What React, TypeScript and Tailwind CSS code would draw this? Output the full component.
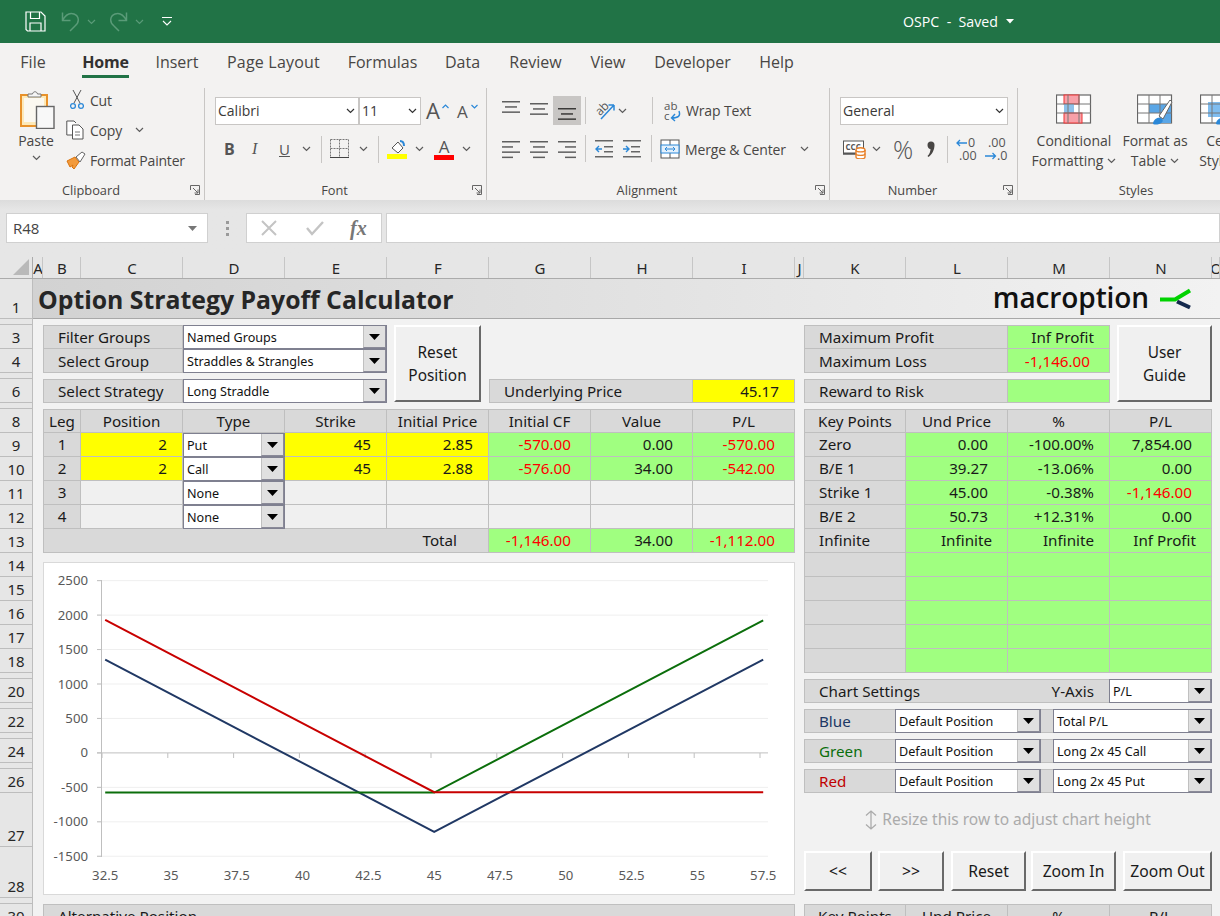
import React from "react";

const ui = "font-['Open_Sans','Noto_Sans',sans-serif]";
const cellFont = "font-['Noto_Sans','Open_Sans',sans-serif]";

const Chev = ({ className = "", color = "#5c5c5c" }: { className?: string; color?: string }) => (
  <svg width="9" height="6" viewBox="0 0 9 6" className={className}>
    <path d="M1 1l3.5 3.5L8 1" fill="none" stroke={color} strokeWidth="1.2" />
  </svg>
);

const Lines = ({ widths, x = [0, 0, 0, 0], y0 = 1, active = false }: { widths: number[]; x?: number[]; y0?: number; active?: boolean }) => (
  <svg width="18" height="20" viewBox="0 0 18 20" className="block">
    {widths.map((w, i) => (
      <rect key={i} x={x[i]} y={y0 + i * 5.2} width={w} height="1.5" fill={active ? "#3b3a39" : "#5f5f5f"} />
    ))}
  </svg>
);

const Launcher = () => (
  <svg width="10" height="10" viewBox="0 0 10 10">
    <path d="M.5 5V.5H9.5V9.5H5M3 3l5 5M8 4.500V8H4.500" fill="none" stroke="#666" strokeWidth="1" />
  </svg>
);

const GroupLabel = ({ children, launcher = true }: { children: string; launcher?: boolean }) => (
  <div className="flex h-[20px] items-center justify-center relative top-[1px] pr-[22px] text-[12.8px] text-[#484644]">
    {children}
    {launcher && (
      <span className="absolute right-[4px] top-[4px] flex">
        <Launcher />
      </span>
    )}
  </div>
);

const Vsep = () => <div className="w-px h-[27px] bg-[#c8c6c4]" />;

function TopBar() {
  return (
    <div className="h-[43px] bg-[#217346] flex items-center pl-[25px] text-white">
      <svg width="21" height="21" viewBox="0 0 21 21" className="shrink-0">
        <path d="M1 1h15l4 4v15H2.500L1 18.500z" fill="none" stroke="#fff" strokeWidth="1.2" />
        <path d="M5.500 1v6.500h9V1M5 20v-8h11v8" fill="none" stroke="#fff" strokeWidth="1.2" />
      </svg>
      <svg width="19" height="21" viewBox="0 0 19 21" className="ml-[15px] shrink-0">
        <path d="M1.500 1.500v8h8M1.500 9.500C5 3 9 1.500 13 3c5 2 6 8 1 12l-5 5" fill="none" stroke="#5a9b78" strokeWidth="1.5" />
      </svg>
      <Chev className="ml-[7px]" color="#5a9b78" />
      <svg width="19" height="21" viewBox="0 0 19 21" className="ml-[13px] shrink-0">
        <path d="M17.500 1.500v8h-8M17.500 9.500C14 3 10 1.500 6 3c-5 2-6 8-1 12l5 5" fill="none" stroke="#5a9b78" strokeWidth="1.5" />
      </svg>
      <Chev className="ml-[7px]" color="#5a9b78" />
      <svg width="10" height="9" viewBox="0 0 10 9" className="ml-[18px] shrink-0">
        <path d="M0 .5h10M1 4l4 4 4-4" fill="none" stroke="#fff" strokeWidth="1.1" />
      </svg>
      <span className={`ml-[731px] text-[14.2px] whitespace-pre ${ui}`}>OSPC  -  Saved</span>
      <svg width="8" height="5" viewBox="0 0 8 5" className="ml-[8px]">
        <path d="M0 0h8L4 4.500z" fill="#fff" />
      </svg>
    </div>
  );
}

function Tabs() {
  const tabs: [string, string][] = [
    ["File", "ml-[21px] w-[24px]"],
    ["Home", "ml-[37px] w-[47px]"],
    ["Insert", "ml-[27px] w-[42px]"],
    ["Page Layout", "ml-[29px] w-[93px]"],
    ["Formulas", "ml-[28px] w-[69px]"],
    ["Data", "ml-[28px] w-[35px]"],
    ["Review", "ml-[29px] w-[53px]"],
    ["View", "ml-[28px] w-[36px]"],
    ["Developer", "ml-[28px] w-[77px]"],
    ["Help", "ml-[28px] w-[35px]"],
  ];
  return (
    <div className={`h-[37px] flex items-center bg-[#f3f2f1] text-[16px] text-[#484644] ${ui}`}>
      {tabs.map(([t, m]) => (
        <div
          key={t}
          className={`${m} relative h-[37px] flex items-center justify-center whitespace-nowrap ${t === "Page Layout" ? "tracking-[0.2px]" : ""} ${t === "Home" ? "font-bold text-[#323130] tracking-[-0.2px]" : ""}`}
        >
          {t}
          {t === "Home" && <div className="absolute left-0 right-0 top-[32px] h-[3px] bg-[#217346]" />}
        </div>
      ))}
    </div>
  );
}

function Combo({ text, w, h = "h-[28px]" }: { text: string; w: string; h?: string }) {
  return (
    <div className={`${w} ${h} bg-white border border-[#c8c6c4] flex items-center justify-between pl-[2px] pr-[3px] text-[14px] text-[#3b3a39]`}>
      <span className="-mt-[1px]">{text}</span>
      <Chev color="#333" />
    </div>
  );
}

function Clipboard() {
  return (
    <div className="w-[205px] shrink-0 h-[112px] mt-[8px] border-r border-[#c8c6c4] flex flex-col">
      <div className="flex-1 flex">
        <div className="w-[60px] ml-[6px] flex flex-col items-center pt-[2px]">
          <svg width="35" height="39" viewBox="0 0 35 39" className="ml-[3px]">
            <rect x="1" y="5" width="26" height="31" fill="#fde9b8" stroke="#e8922a" strokeWidth="2" />
            <path d="M4 8h20v24H4z" fill="#fbf8f0" />
            <path d="M8 7V4h4.500C13 1 17 1 17.500 4H21v3z" fill="#f5f5f5" stroke="#777" />
            <rect x="16.500" y="16.500" width="17.500" height="22" fill="#f8f8f8" stroke="#666" strokeWidth="1.4" />
          </svg>
          <div className="text-[14px] text-[#484644] leading-[18px] mt-[3px]">Paste</div>
          <Chev className="mt-[5px]" />
        </div>
        <div className="flex flex-col text-[14px] text-[#484644] tracking-[-0.2px] -mt-[3px]">
          <div className="h-[30px] flex items-center">
            <span className="w-[24px] flex justify-end pr-[6px]">
              <svg width="14" height="20" viewBox="0 0 14 20">
                <path d="M3 0l7 13M11 0L4 13" stroke="#555" fill="none" />
                <circle cx="3" cy="16" r="2.400" fill="none" stroke="#2b88d8" strokeWidth="1.3" />
                <circle cx="11" cy="16" r="2.400" fill="none" stroke="#2b88d8" strokeWidth="1.3" />
              </svg>
            </span>
            Cut
          </div>
          <div className="h-[30px] flex items-center">
            <span className="w-[24px] flex">
              <svg width="18" height="20" viewBox="0 0 18 20">
                <path d="M6 15H.8V1H8l2 2M6.500 5H13l4 4v10H6.500z" fill="#fff" stroke="#555" />
                <path d="M9 12h5M9 15h5" stroke="#777" />
              </svg>
            </span>
            Copy
            <Chev className="ml-[13px]" />
          </div>
          <div className="h-[30px] flex items-center">
            <span className="w-[24px] flex">
              <svg width="21" height="19" viewBox="0 0 21 19">
                <path d="M1 10l8-4 4 5-5 7-2-2 1-2-3 2-3-6z" fill="#f29a3b" stroke="#d9730d" />
                <path d="M10 6l6-5 3 2-5 8z" fill="#fff" stroke="#666" />
              </svg>
            </span>
            Format Painter
          </div>
        </div>
      </div>
      <GroupLabel>Clipboard</GroupLabel>
    </div>
  );
}

function FontGroup() {
  return (
    <div className="w-[282px] shrink-0 h-[112px] mt-[8px] border-r border-[#c8c6c4] flex flex-col">
      <div className="flex-1 pl-[10px] pt-[9px]">
        <div className="flex items-center">
          <Combo text="Calibri" w="w-[144px]" />
          <Combo text="11" w="w-[62px]" />
          <span className="ml-[5px] text-[22px] leading-none text-[#555] w-[15px] -mt-[2px]">A</span>
          <svg width="7" height="5" viewBox="0 0 7 5" className="-mt-[10px] ml-[1px]">
            <path d="M.5 4L3.500 1 6.500 4" fill="none" stroke="#2b88d8" strokeWidth="1.2" />
          </svg>
          <span className="ml-[8px] text-[17px] leading-none text-[#555] w-[14px]">A</span>
          <svg width="7" height="5" viewBox="0 0 7 5" className="-mt-[10px]">
            <path d="M.5 1L3.500 4 6.500 1" fill="none" stroke="#2b88d8" strokeWidth="1.2" />
          </svg>
        </div>
        <div className="flex items-center h-[28px] mt-[10px] ml-[9px] text-[#484644]">
          <span className="w-[28px] text-[16px] font-bold text-[#555]">B</span>
          <span className="w-[27px] text-[16px] italic text-[#555] font-['Liberation_Serif',serif]">I</span>
          <span className="w-[23px] text-[15px] underline text-[#555]">U</span>
          <Chev />
          <div className="ml-[10px] mr-[8px]">
            <Vsep />
          </div>
          <svg width="20" height="20" viewBox="0 0 20 20">
            <path d="M.5.5h18v18M.5.5v18M9.500.5v18M.5 9.500h18" fill="none" stroke="#777" strokeDasharray="2 1" />
            <path d="M0 18.500h19" stroke="#444" />
          </svg>
          <Chev className="ml-[9px]" />
          <div className="ml-[10px] mr-[8px]">
            <Vsep />
          </div>
          <svg width="21" height="21" viewBox="0 0 21 21">
            <path d="M5 9l6-6 5 6-5 5z" fill="#fff" stroke="#555" />
            <path d="M13 2c2 0 4 1 4 5" fill="none" stroke="#2b88d8" strokeWidth="2" />
            <rect x="0" y="15" width="20" height="5" fill="#ffff00" />
          </svg>
          <Chev className="ml-[7px]" />
          <div className="ml-[10px] w-[20px] flex flex-col items-center">
            <span className="text-[17px] leading-[17px] text-[#555]">A</span>
            <div className="w-[20px] h-[5px] bg-[#ff0000]" />
          </div>
          <Chev className="ml-[8px]" />
        </div>
      </div>
      <GroupLabel>Font</GroupLabel>
    </div>
  );
}

const Arrow = ({ dir }: { dir: "l" | "r" }) => (
  <svg width="18" height="20" viewBox="0 0 18 20" className="block">
    <rect x="0" y="1" width="18" height="1.500" fill="#666" />
    <rect x={dir === "l" ? 9 : 8} y="7" width="9" height="1.500" fill="#666" />
    <rect x={dir === "l" ? 9 : 8} y="12" width="9" height="1.500" fill="#666" />
    <rect x="0" y="17" width="18" height="1.500" fill="#666" />
    <path d={dir === "l" ? "M7 10H1M4 7l-3 3 3 3" : "M0 10h6M3 7l3 3-3 3"} fill="none" stroke="#2b88d8" strokeWidth="1.4" />
  </svg>
);

function Alignment() {
  return (
    <div className="w-[343px] shrink-0 h-[112px] mt-[8px] border-r border-[#c8c6c4] flex flex-col">
      <div className="flex-1 pl-[15px] pt-[8px]">
        <div className="flex items-center h-[29px]">
          <div className="w-[28px] -mt-[8px]">
            <Lines widths={[18, 12, 18]} x={[0, 3, 0]} y0={4} />
          </div>
          <div className="w-[23px] -mt-[3px]">
            <Lines widths={[18, 12, 18]} x={[0, 3, 0]} y0={4} />
          </div>
          <div className="w-[28px] h-[29px] bg-[#c8c6c4] flex items-center justify-center pt-[7px]">
            <Lines widths={[18, 12, 18]} x={[0, 3, 0]} y0={4} active />
          </div>
          <div className="ml-[4px] mr-[8px]">
            <Vsep />
          </div>
          <svg width="23" height="24" viewBox="0 0 23 24" className="overflow-visible">
            <path d="M7 20L20 6M20 6h-5.500M20 6v5.500" fill="none" stroke="#2b88d8" strokeWidth="1.5" />
            <text x="2" y="14" fontSize="12" fill="#555" transform="rotate(-45 8 11)">ab</text>
          </svg>
          <Chev className="ml-[1px]" />
          <div className="ml-[25px] mr-[11px]">
            <Vsep />
          </div>
          <svg width="18" height="22" viewBox="0 0 18 22" className="overflow-visible">
            <text x="0" y="10" fontSize="11.500" fill="#555">ab</text>
            <text x="0" y="20" fontSize="11.500" fill="#555">c</text>
            <path d="M15 11c2 5-1 7-7 7M11 14l-3.500 4 3.500 3" fill="none" stroke="#2b88d8" strokeWidth="1.4" />
          </svg>
          <span className="ml-[4px] text-[14px] text-[#484644] tracking-[-0.15px]">Wrap Text</span>
        </div>
        <div className="flex items-center h-[29px] mt-[9px]">
          <div className="w-[28px]">
            <Lines widths={[18, 11, 18, 11]} y0={2} />
          </div>
          <div className="w-[28px]">
            <Lines widths={[18, 12, 18, 12]} x={[0, 3, 0, 3]} y0={2} />
          </div>
          <div className="w-[23px]">
            <Lines widths={[18, 11, 18, 11]} x={[0, 7, 0, 7]} y0={2} />
          </div>
          <div className="ml-[4px] mr-[9px]">
            <Vsep />
          </div>
          <div className="w-[28px]">
            <Arrow dir="l" />
          </div>
          <div className="w-[18px]">
            <Arrow dir="r" />
          </div>
          <div className="ml-[10px] mr-[8px]">
            <Vsep />
          </div>
          <svg width="20" height="20" viewBox="0 0 20 20">
            <rect x="1" y="1" width="18" height="18" fill="#fff" stroke="#555" />
            <path d="M10 1v5M10 14v5" stroke="#555" />
            <rect x="1" y="6" width="18" height="8" fill="#e3f0fb" stroke="#2b88d8" />
            <path d="M5 10h10M7 8l-2 2 2 2M13 8l2 2-2 2" fill="none" stroke="#2b88d8" />
          </svg>
          <span className="ml-[5px] mt-[2px] text-[14px] text-[#484644] tracking-[-0.15px]">Merge &amp; Center</span>
          <Chev className="ml-[14px]" />
        </div>
      </div>
      <GroupLabel>Alignment</GroupLabel>
    </div>
  );
}

function NumberGroup() {
  return (
    <div className="w-[188px] shrink-0 h-[112px] mt-[8px] border-r border-[#c8c6c4] flex flex-col">
      <div className="flex-1 pl-[10px] pt-[9px]">
        <Combo text="General" w="w-[168px]" />
        <div className="flex items-center h-[28px] mt-[10px] ml-[3px]">
          <svg width="23" height="20" viewBox="0 0 23 20" className="shrink-0">
            <rect x=".5" y="2" width="20" height="13" fill="#fff" stroke="#555" />
            <rect x="0" y="13.500" width="14" height="2" fill="#555" />
            <text x="2.500" y="11" fontSize="8" fontWeight="700" fill="#555">CCC</text>
            <path d="M13 11c0-3 9-3 9 0v7c0 2.500-9 2.500-9 0z" fill="#fff" stroke="#e8812a" strokeWidth="1.4" />
            <path d="M13 11c0 2.500 9 2.500 9 0M13 14.500c0 2.500 9 2.500 9 0" fill="none" stroke="#e8812a" strokeWidth="1.4" />
          </svg>
          <Chev className="ml-[6px]" />
          <span className="ml-[12px] text-[25px] leading-none text-[#555] font-['Open_Sans',sans-serif] w-[20px] font-light">%</span>
          <svg width="10" height="16" viewBox="0 0 10 16" className="ml-[13px] shrink-0">
            <path d="M1.500 4a3.500 3.500 0 0 1 7 0C8.500 9 6 13.500 2.500 16L1.500 15C3.500 13 4.500 10.500 4.500 8 2.500 8 1.500 6 1.500 4z" fill="#484644" />
          </svg>
          <div className="ml-[11px] mr-[8px]">
            <Vsep />
          </div>
          <div className="w-[20px] h-[26px] text-[12.5px] text-[#555] relative shrink-0">
            <span className="absolute left-[12px] top-0 leading-[13px]">0</span>
            <span className="absolute left-[3px] top-[13px] leading-[13px]">.00</span>
            <svg width="12" height="8" viewBox="0 0 12 8" className="absolute left-0 top-[3px]">
              <path d="M11 4H1M4 1L1 4l3 3" fill="none" stroke="#2b88d8" strokeWidth="1.3" />
            </svg>
          </div>
          <div className="ml-[9px] w-[20px] h-[26px] text-[12.5px] text-[#555] relative shrink-0">
            <span className="absolute left-[3px] top-0 leading-[13px]">.00</span>
            <span className="absolute left-[12px] top-[13px] leading-[13px]">.0</span>
            <svg width="12" height="8" viewBox="0 0 12 8" className="absolute left-0 top-[16px]">
              <path d="M0 4h10M7.500 1l3 3-3 3" fill="none" stroke="#2b88d8" strokeWidth="1.3" />
            </svg>
          </div>
        </div>
      </div>
      <GroupLabel>Number</GroupLabel>
    </div>
  );
}

const GridIcon = ({ kind }: { kind: "cf" | "table" | "cell" }) => (
  <svg width="36" height="32" viewBox="0 0 36 32" className="shrink-0">
    <rect x=".5" y="1" width="34" height="28" fill="#fff" stroke="#666" strokeWidth="1.2" />
    {kind === "cf" && (
      <>
        <rect x="8" y="1" width="15" height="9" fill="#f8a0a8" stroke="#e33" />
        <rect x="8" y="10" width="10" height="9" fill="#8ec1ea" />
        <rect x="8" y="19" width="18" height="10" fill="#f8a0a8" stroke="#e33" />
      </>
    )}
    {kind === "table" && (
      <>
        <rect x="12" y="10" width="22" height="9" fill="#5aa6e6" />
        <rect x="23" y="10" width="11" height="19" fill="#5aa6e6" />
      </>
    )}
    {kind === "cell" && <rect x="8" y="8" width="27" height="15" fill="#7fbdf0" />}
    <path d="M1 10h34M1 19h34M12 1v28M23 1v28" fill="none" stroke="#777" />
    {kind !== "cf" && (
      <>
        <path d="M22 22L33 6l2 2-9 17z" fill="#fff" stroke="#666" />
        <path d="M16 30c0-5 6-8 9-5s-4 7-9 5z" fill="#2b88d8" />
      </>
    )}
  </svg>
);

function Styles() {
  return (
    <div className="flex-1 h-[112px] mt-[8px] flex flex-col overflow-hidden">
      <div className="flex-1 flex text-[14px] leading-[20px] text-[#484644] text-center whitespace-nowrap">
        <div className="w-[112px] flex flex-col items-center pt-[6px] shrink-0">
          <GridIcon kind="cf" />
          <div className="mt-[5px]">Conditional</div>
          <div className="flex items-center">
            Formatting
            <Chev className="ml-[4px]" />
          </div>
        </div>
        <div className="w-[50px] flex flex-col items-center pt-[6px] shrink-0">
          <GridIcon kind="table" />
          <div className="mt-[5px]">Format as</div>
          <div className="flex items-center">
            Table
            <Chev className="ml-[4px]" />
          </div>
        </div>
        <div className="w-[76px] flex flex-col items-center pt-[6px] shrink-0">
          <GridIcon kind="cell" />
          <div className="mt-[5px]">Cell</div>
          <div>Styles</div>
        </div>
      </div>
      <div className="w-[258px]">
        <GroupLabel launcher={false}>Styles</GroupLabel>
      </div>
    </div>
  );
}

function FormulaBar() {
  return (
    <div className={`h-[57px] bg-[#e6e6e6] bg-gradient-to-b from-[#dcdcdc] to-[#e6e6e6] to-[10px] pt-[13px] flex items-start ${ui}`}>
      <div className="ml-[6px] w-[202px] h-[30px] bg-white border border-[#d0d0d0] flex items-center justify-between pl-[6px] pr-[10px] text-[15px] text-[#444]">
        R48
        <svg width="9" height="5" viewBox="0 0 9 5">
          <path d="M0 0h9L4.500 5z" fill="#777" />
        </svg>
      </div>
      <div className="w-[38px] flex flex-col items-center gap-[3px] pt-[8px]">
        <div className="w-[3px] h-[3px] bg-[#9a9a9a]" />
        <div className="w-[3px] h-[3px] bg-[#9a9a9a]" />
        <div className="w-[3px] h-[3px] bg-[#9a9a9a]" />
      </div>
      <div className="w-[136px] h-[30px] bg-white border border-[#d0d0d0] flex items-center pl-[14px]">
        <svg width="16" height="16" viewBox="0 0 16 16">
          <path d="M1 1l14 14M15 1L1 15" stroke="#c4c4c4" strokeWidth="2" />
        </svg>
        <svg width="18" height="16" viewBox="0 0 18 16" className="ml-[29px]">
          <path d="M1 8l5 6L17 2" fill="none" stroke="#c4c4c4" strokeWidth="2.400" />
        </svg>
        <span className="ml-[26px] italic font-bold text-[20px] leading-none text-[#777] font-['Liberation_Serif',serif]">fx</span>
      </div>
      <div className="ml-[4px] flex-1 h-[30px] bg-white border border-[#d0d0d0]" />
    </div>
  );
}

const lblBorder = "border-[#bfbfbf]";

function Cell({
  pos,
  tone = "label",
  align = "left",
  t = false,
  l = false,
  children,
  extra = "",
}: {
  pos: string;
  tone?: "label" | "green" | "yellow" | "blank";
  align?: "left" | "center" | "right" | "rightWide" | "pad";
  t?: boolean;
  l?: boolean;
  children?: React.ReactNode;
  extra?: string;
}) {
  const bg = tone === "label" ? "bg-[#d9d9d9]" : tone === "green" ? "bg-[#a0ff80]" : tone === "yellow" ? "bg-[#ffff00]" : "bg-[#f0f0f0]";
  const al =
    align === "center"
      ? "justify-center"
      : align === "right"
      ? "justify-end pr-[15px]"
      : align === "rightWide"
      ? "justify-end pr-[19px]"
      : "pl-[14px]";
  return (
    <div
      className={`${pos} ${bg} ${al} ${t ? "border-t" : ""} ${l ? "border-l" : ""} border-r border-b ${lblBorder} flex items-center min-w-0 whitespace-nowrap text-[15.2px] text-[#1a1a1a] ${extra}`}
    >
      {children}
    </div>
  );
}

function Drop({ pos = "", label, w = "" }: { pos?: string; label: string; w?: string }) {
  return (
    <div className={`${pos} ${w} bg-white border border-[#7f8090] flex items-stretch min-w-0 text-[12.6px] text-[#111]`}>
      <span className="flex-1 pl-[3px] pt-[2px] flex items-center whitespace-nowrap overflow-hidden">{label}</span>
      <span className="w-[23px] shrink-0 bg-[#e0e0e0] border-l border-[#c0c0c0] border-r border-b border-r-[#8a8a98] border-b-[#8a8a98] flex items-center justify-center">
        <svg width="11" height="6" viewBox="0 0 11 6">
          <path d="M0 0h11L5.500 6z" fill="#000" />
        </svg>
      </span>
    </div>
  );
}

function Btn({ children, className = "" }: { children: React.ReactNode; className?: string }) {
  return (
    <div
      className={`bg-[#f0f0f0] border-t-2 border-l-2 border-white border-r-2 border-b-2 border-r-[#696969] border-b-[#696969] flex items-center justify-center text-center leading-[23px] text-[#1a1a1a] ${className}`}
    >
      {children}
    </div>
  );
}

function ColHeaders() {
  const cols: [string, string][] = [
    ["A", "col-[2]"],
    ["B", "col-[3]"],
    ["C", "col-[4]"],
    ["D", "col-[5]"],
    ["E", "col-[6]"],
    ["F", "col-[7]"],
    ["G", "col-[8]"],
    ["H", "col-[9]"],
    ["I", "col-[10]"],
    ["J", "col-[11]"],
    ["K", "col-[12]"],
    ["L", "col-[13]"],
    ["M", "col-[14]"],
    ["N", "col-[15]"],
    ["O", "col-[16]"],
  ];
  return (
    <>
      <div className="col-[1] row-[1] bg-[#e6e6e6] border-b border-r border-[#ababab] relative">
        <svg width="16" height="16" viewBox="0 0 16 16" className="absolute right-[3px] bottom-[3px]">
          <path d="M16 0v16H0z" fill="#b9b9b9" />
        </svg>
      </div>
      {cols.map(([c, p]) => (
        <div
          key={c}
          className={`${p} row-[1] bg-[#e6e6e6] border-b border-[#ababab] relative flex items-center justify-center overflow-hidden text-[15px] text-[#262626] pt-[1px]`}
        >
          {c}
          <div className="absolute right-0 top-0 bottom-0 w-px bg-[#c6c6c6]" />
        </div>
      ))}
    </>
  );
}

function RowHeaders() {
  const rows: [string, string][] = [
    ["1", "row-[2]"],
    ["2", "row-[3]"],
    ["3", "row-[4]"],
    ["4", "row-[5]"],
    ["5", "row-[6]"],
    ["6", "row-[7]"],
    ["7", "row-[8]"],
    ["8", "row-[9]"],
    ["9", "row-[10]"],
    ["10", "row-[11]"],
    ["11", "row-[12]"],
    ["12", "row-[13]"],
    ["13", "row-[14]"],
    ["14", "row-[15]"],
    ["15", "row-[16]"],
    ["16", "row-[17]"],
    ["17", "row-[18]"],
    ["18", "row-[19]"],
    ["19", "row-[20]"],
    ["20", "row-[21]"],
    ["21", "row-[22]"],
    ["22", "row-[23]"],
    ["23", "row-[24]"],
    ["24", "row-[25]"],
    ["25", "row-[26]"],
    ["26", "row-[27]"],
    ["27", "row-[28]"],
    ["28", "row-[29]"],
    ["29", "row-[30]"],
    ["30", "row-[31]"],
  ];
  const hidden = ["2", "5", "7", "19", "21", "23", "25", "29"];
  return (
    <>
      {rows.map(([r, p]) => (
        <div
          key={r}
          className={`col-[1] ${p} bg-[#e6e6e6] border-b border-r border-[#bdbdbd] flex items-end justify-center pb-[1px] overflow-hidden text-[15px] leading-[20px] text-[#262626]`}
        >
          {hidden.includes(r) ? null : r}
        </div>
      ))}
    </>
  );
}

function Chart() {
  const y = (v: number) => 752.9 - (v * 34.45) / 500;
  const x = (v: number) => 434.2 + (v - 45) * 26.32;
  const ticksY = [2500, 2000, 1500, 1000, 500, 0, -500, -1000, -1500];
  const xs = [32.5, 35, 37.5, 40, 42.5, 45, 47.5, 50, 52.5, 55, 57.5];
  const line = (a: number, b: number, c: number) => `${x(32.5)},${y(a)} ${x(45)},${y(b)} ${x(57.5)},${y(c)}`;
  return (
    <div className="col-[3/11] row-[15/30] mt-[9px] mb-[3px] bg-white border border-[#d9d9d9]">
      <svg width="750" height="331" viewBox="44 563 750 331" className="block">
        {ticksY.map((t) => (
          <g key={t}>
            <line x1="97" x2="768" y1={y(t)} y2={y(t)} stroke={t === 0 ? "#bfbfbf" : "#efefef"} strokeWidth="1" />
            <line x1="97" x2="101" y1={y(t)} y2={y(t)} stroke="#bfbfbf" />
            <text x="88" y={y(t) + 4.5} textAnchor="end" fontSize="13.2" fill="#595959" fontFamily="Noto Sans">
              {t}
            </text>
          </g>
        ))}
        <line x1="101.500" x2="101.500" y1="580" y2="857" stroke="#bfbfbf" />
        {[0, 1, 2, 3, 4, 5, 6, 7, 8, 9, 10].map((i) => (
          <line key={i} x1={102 + i * 65.8} x2={102 + i * 65.8} y1={753} y2={758} stroke="#bfbfbf" />
        ))}
        {xs.map((v) => (
          <text key={v} x={x(v)} y="880" textAnchor="middle" fontSize="13.2" fill="#595959" fontFamily="Noto Sans">
            {v}
          </text>
        ))}
        <polyline points={line(1354, -1146, 1354)} fill="none" stroke="#203864" strokeWidth="2" />
        <polyline points={line(-576, -576, 1924)} fill="none" stroke="#0b6e0b" strokeWidth="2" />
        <polyline points={line(1930, -570, -570)} fill="none" stroke="#c80000" strokeWidth="2" />
      </svg>
    </div>
  );
}

function Logo() {
  return (
    <div className="col-[12/16] row-[2] flex items-center justify-end pr-[20px] pb-[5px] z-10">
      <span className="text-[28px] font-semibold text-[#111] font-['Open_Sans',sans-serif] leading-none tracking-[-0.1px]">macroption</span>
      <svg width="32" height="24" viewBox="0 0 32 24" className="ml-[11px] mt-[5px]">
        <path d="M17 14.500l13 6" stroke="#14294d" strokeWidth="4" />
        <path d="M0 12.500h15L30 3.500" fill="none" stroke="#00d200" strokeWidth="4" />
      </svg>
    </div>
  );
}

function Sheet() {
  return (
    <div className={`grid grid-cols-[33px_10px_38px_102px_102px_102px_102px_102px_102px_102px_9px_102px_102px_102px_102px_1fr] grid-rows-[22px_40px_6px_24px_24px_6px_24px_6px_24px_24px_24px_24px_24px_24px_24px_24px_24px_24px_24px_6px_24px_6px_24px_6px_24px_6px_24px_54px_51px_6px_24px] bg-[#f2f2f2] ${cellFont}`}>
      <ColHeaders />
      <RowHeaders />

      <div className="col-[2/17] row-[2] bg-gradient-to-r from-[#d2d2d2] to-[#f2f2f2] border-b border-[#a8a8a8] flex items-center pl-[5px] pt-[2px]">
        <span className="text-[24.8px] font-bold text-[#262626] font-['Open_Sans',sans-serif]">Option Strategy Payoff Calculator</span>
      </div>
      <Logo />

      {/* Strategy selection */}
      <Cell pos="col-[3/5] row-[4]" align="pad" t l>Filter Groups</Cell>
      <Drop pos="col-[5/7] row-[4]" label="Named Groups" />
      <Cell pos="col-[3/5] row-[5]" align="pad" l extra="pt-[1px]">Select Group</Cell>
      <Drop pos="col-[5/7] row-[5]" label="Straddles & Strangles" />
      <Cell pos="col-[3/5] row-[7]" align="pad" t l>Select Strategy</Cell>
      <Drop pos="col-[5/7] row-[7]" label="Long Straddle" />
      <Btn className="col-[7] row-[4/8] ml-[7px] mr-[8px] mb-[1px] text-[15.4px]">
        Reset
        <br />
        Position
      </Btn>
      <Cell pos="col-[8/10] row-[7]" align="pad" t l>Underlying Price</Cell>
      <Cell pos="col-[10] row-[7]" tone="yellow" align="right" t>45.17</Cell>

      {/* Legs */}
      <Cell pos="col-[3] row-[9]" align="center" t l>Leg</Cell>
      <Cell pos="col-[4] row-[9]" align="center" t>Position</Cell>
      <Cell pos="col-[5] row-[9]" align="center" t>Type</Cell>
      <Cell pos="col-[6] row-[9]" align="center" t>Strike</Cell>
      <Cell pos="col-[7] row-[9]" align="center" t>Initial Price</Cell>
      <Cell pos="col-[8] row-[9]" align="center" t>Initial CF</Cell>
      <Cell pos="col-[9] row-[9]" align="center" t>Value</Cell>
      <Cell pos="col-[10] row-[9]" align="center" t>P/L</Cell>

      <Cell pos="col-[3] row-[10]" align="center" l>1</Cell>
      <Cell pos="col-[4] row-[10]" tone="yellow" align="right">2</Cell>
      <Drop pos="col-[5] row-[10]" label="Put" />
      <Cell pos="col-[6] row-[10]" tone="yellow" align="right">45</Cell>
      <Cell pos="col-[7] row-[10]" tone="yellow" align="right">2.85</Cell>
      <Cell pos="col-[8] row-[10]" tone="green" align="rightWide" extra="text-[#ff0000]">-570.00</Cell>
      <Cell pos="col-[9] row-[10]" tone="green" align="rightWide">0.00</Cell>
      <Cell pos="col-[10] row-[10]" tone="green" align="rightWide" extra="text-[#ff0000]">-570.00</Cell>

      <Cell pos="col-[3] row-[11]" align="center" l>2</Cell>
      <Cell pos="col-[4] row-[11]" tone="yellow" align="right">2</Cell>
      <Drop pos="col-[5] row-[11]" label="Call" />
      <Cell pos="col-[6] row-[11]" tone="yellow" align="right">45</Cell>
      <Cell pos="col-[7] row-[11]" tone="yellow" align="right">2.88</Cell>
      <Cell pos="col-[8] row-[11]" tone="green" align="rightWide" extra="text-[#ff0000]">-576.00</Cell>
      <Cell pos="col-[9] row-[11]" tone="green" align="rightWide">34.00</Cell>
      <Cell pos="col-[10] row-[11]" tone="green" align="rightWide" extra="text-[#ff0000]">-542.00</Cell>

      <Cell pos="col-[3] row-[12]" align="center" l>3</Cell>
      <Cell pos="col-[4] row-[12]" tone="blank" />
      <Drop pos="col-[5] row-[12]" label="None" />
      <Cell pos="col-[6] row-[12]" tone="blank" />
      <Cell pos="col-[7] row-[12]" tone="blank" />
      <Cell pos="col-[8] row-[12]" tone="blank" />
      <Cell pos="col-[9] row-[12]" tone="blank" />
      <Cell pos="col-[10] row-[12]" tone="blank" />

      <Cell pos="col-[3] row-[13]" align="center" l>4</Cell>
      <Cell pos="col-[4] row-[13]" tone="blank" />
      <Drop pos="col-[5] row-[13]" label="None" />
      <Cell pos="col-[6] row-[13]" tone="blank" />
      <Cell pos="col-[7] row-[13]" tone="blank" />
      <Cell pos="col-[8] row-[13]" tone="blank" />
      <Cell pos="col-[9] row-[13]" tone="blank" />
      <Cell pos="col-[10] row-[13]" tone="blank" />

      <Cell pos="col-[3/8] row-[14]" align="right" l extra="!pr-[31px]">Total</Cell>
      <Cell pos="col-[8] row-[14]" tone="green" align="rightWide" extra="text-[#ff0000]">-1,146.00</Cell>
      <Cell pos="col-[9] row-[14]" tone="green" align="rightWide">34.00</Cell>
      <Cell pos="col-[10] row-[14]" tone="green" align="rightWide" extra="text-[#ff0000]">-1,112.00</Cell>

      <Chart />

      {/* Summary */}
      <Cell pos="col-[12/14] row-[4]" align="pad" t l>Maximum Profit</Cell>
      <Cell pos="col-[14] row-[4]" tone="green" align="right" t>Inf Profit</Cell>
      <Cell pos="col-[12/14] row-[5]" align="pad" l extra="pt-[1px]">Maximum Loss</Cell>
      <Cell pos="col-[14] row-[5]" tone="green" align="rightWide" extra="text-[#ff0000] pt-[1px]">-1,146.00</Cell>
      <Cell pos="col-[12/14] row-[7]" align="pad" t l>Reward to Risk</Cell>
      <Cell pos="col-[14] row-[7]" tone="green" t />
      <Btn className="col-[15] row-[4/8] ml-[7px] mb-[1px] text-[15.4px]">
        User
        <br />
        Guide
      </Btn>

      {/* Key points */}
      <Cell pos="col-[12] row-[9]" align="center" t l>Key Points</Cell>
      <Cell pos="col-[13] row-[9]" align="center" t>Und Price</Cell>
      <Cell pos="col-[14] row-[9]" align="center" t>%</Cell>
      <Cell pos="col-[15] row-[9]" align="center" t>P/L</Cell>

      <Cell pos="col-[12] row-[10]" l>Zero</Cell>
      <Cell pos="col-[13] row-[10]" tone="green" align="rightWide">0.00</Cell>
      <Cell pos="col-[14] row-[10]" tone="green" align="right">-100.00%</Cell>
      <Cell pos="col-[15] row-[10]" tone="green" align="rightWide">7,854.00</Cell>

      <Cell pos="col-[12] row-[11]" l>B/E 1</Cell>
      <Cell pos="col-[13] row-[11]" tone="green" align="rightWide">39.27</Cell>
      <Cell pos="col-[14] row-[11]" tone="green" align="right">-13.06%</Cell>
      <Cell pos="col-[15] row-[11]" tone="green" align="rightWide">0.00</Cell>

      <Cell pos="col-[12] row-[12]" l>Strike 1</Cell>
      <Cell pos="col-[13] row-[12]" tone="green" align="rightWide">45.00</Cell>
      <Cell pos="col-[14] row-[12]" tone="green" align="right">-0.38%</Cell>
      <Cell pos="col-[15] row-[12]" tone="green" align="rightWide" extra="text-[#ff0000]">-1,146.00</Cell>

      <Cell pos="col-[12] row-[13]" l>B/E 2</Cell>
      <Cell pos="col-[13] row-[13]" tone="green" align="rightWide">50.73</Cell>
      <Cell pos="col-[14] row-[13]" tone="green" align="right">+12.31%</Cell>
      <Cell pos="col-[15] row-[13]" tone="green" align="rightWide">0.00</Cell>

      <Cell pos="col-[12] row-[14]" l>Infinite</Cell>
      <Cell pos="col-[13] row-[14]" tone="green" align="right">Infinite</Cell>
      <Cell pos="col-[14] row-[14]" tone="green" align="right">Infinite</Cell>
      <Cell pos="col-[15] row-[14]" tone="green" align="right">Inf Profit</Cell>

      <Cell pos="col-[12] row-[15]" l />
      <Cell pos="col-[13] row-[15]" tone="green" />
      <Cell pos="col-[14] row-[15]" tone="green" />
      <Cell pos="col-[15] row-[15]" tone="green" />
      <Cell pos="col-[12] row-[16]" l />
      <Cell pos="col-[13] row-[16]" tone="green" />
      <Cell pos="col-[14] row-[16]" tone="green" />
      <Cell pos="col-[15] row-[16]" tone="green" />
      <Cell pos="col-[12] row-[17]" l />
      <Cell pos="col-[13] row-[17]" tone="green" />
      <Cell pos="col-[14] row-[17]" tone="green" />
      <Cell pos="col-[15] row-[17]" tone="green" />
      <Cell pos="col-[12] row-[18]" l />
      <Cell pos="col-[13] row-[18]" tone="green" />
      <Cell pos="col-[14] row-[18]" tone="green" />
      <Cell pos="col-[15] row-[18]" tone="green" />
      <Cell pos="col-[12] row-[19]" l />
      <Cell pos="col-[13] row-[19]" tone="green" />
      <Cell pos="col-[14] row-[19]" tone="green" />
      <Cell pos="col-[15] row-[19]" tone="green" />

      {/* Chart settings */}
      <div className="col-[12/16] row-[21] flex bg-[#d9d9d9] border border-[#bfbfbf] text-[15.2px] text-[#1a1a1a] whitespace-nowrap">
        <span className="flex items-center pl-[14px]">Chart Settings</span>
        <span className="flex items-center ml-auto pr-[15px]">Y-Axis</span>
        <Drop label="P/L" w="w-[103px] -my-px -mr-px" />
      </div>
      <div className="col-[12/16] row-[23] flex bg-[#d9d9d9] border border-[#bfbfbf] text-[15.2px] whitespace-nowrap">
        <span className="w-[90px] flex items-center pl-[14px] text-[#203864]">Blue</span>
        <Drop label="Default Position" w="w-[146px] -my-px" />
        <div className="w-[12px]" />
        <Drop label="Total P/L" w="flex-1 -my-px -mr-px" />
      </div>
      <div className="col-[12/16] row-[25] flex bg-[#d9d9d9] border border-[#bfbfbf] text-[15.2px] whitespace-nowrap">
        <span className="w-[90px] flex items-center pl-[14px] text-[#0b6e0b]">Green</span>
        <Drop label="Default Position" w="w-[146px] -my-px" />
        <div className="w-[12px]" />
        <Drop label="Long 2x 45 Call" w="flex-1 -my-px -mr-px" />
      </div>
      <div className="col-[12/16] row-[27] flex bg-[#d9d9d9] border border-[#bfbfbf] text-[15.2px] whitespace-nowrap">
        <span className="w-[90px] flex items-center pl-[14px] text-[#c00000]">Red</span>
        <Drop label="Default Position" w="w-[146px] -my-px" />
        <div className="w-[12px]" />
        <Drop label="Long 2x 45 Put" w="flex-1 -my-px -mr-px" />
      </div>

      <div className="col-[12/16] row-[28] flex items-center justify-center gap-[4px] text-[15.5px] text-[#ababab] pb-[1px] pr-[1px]">
        <svg width="14" height="20" viewBox="0 0 14 20">
          <path d="M7 1v18M2 5.500L7 1l5 4.500M2 14.500L7 19l5-4.500" fill="none" stroke="#ababab" strokeWidth="1.3" />
        </svg>
        Resize this row to adjust chart height
      </div>

      <div className="col-[12/16] row-[29] flex pt-[4px] pb-[7px] text-[15.7px]">
        <Btn className="w-[68px]">&lt;&lt;</Btn>
        <Btn className="w-[66px] ml-[6px]">&gt;&gt;</Btn>
        <Btn className="w-[75px] ml-[7px]">Reset</Btn>
        <Btn className="w-[85px] ml-[5px]">Zoom In</Btn>
        <Btn className="w-[89px] ml-[7px]">Zoom Out</Btn>
      </div>

      {/* Next block, cut off by the window */}
      <Cell pos="col-[3/11] row-[31]" align="pad" t l>Alternative Position</Cell>
      <Cell pos="col-[12] row-[31]" align="center" t l>Key Points</Cell>
      <Cell pos="col-[13] row-[31]" align="center" t>Und Price</Cell>
      <Cell pos="col-[14] row-[31]" align="center" t>%</Cell>
      <Cell pos="col-[15] row-[31]" align="center" t>P/L</Cell>
    </div>
  );
}

export default function App() {
  return (
    <div className={`w-[1220px] h-[916px] overflow-hidden bg-[#f2f2f2] ${ui}`}>
      <TopBar />
      <Tabs />
      <div className="h-[120px] flex bg-[#f3f2f1]">
        <Clipboard />
        <FontGroup />
        <Alignment />
        <NumberGroup />
        <Styles />
      </div>
      <FormulaBar />
      <Sheet />
    </div>
  );
}
